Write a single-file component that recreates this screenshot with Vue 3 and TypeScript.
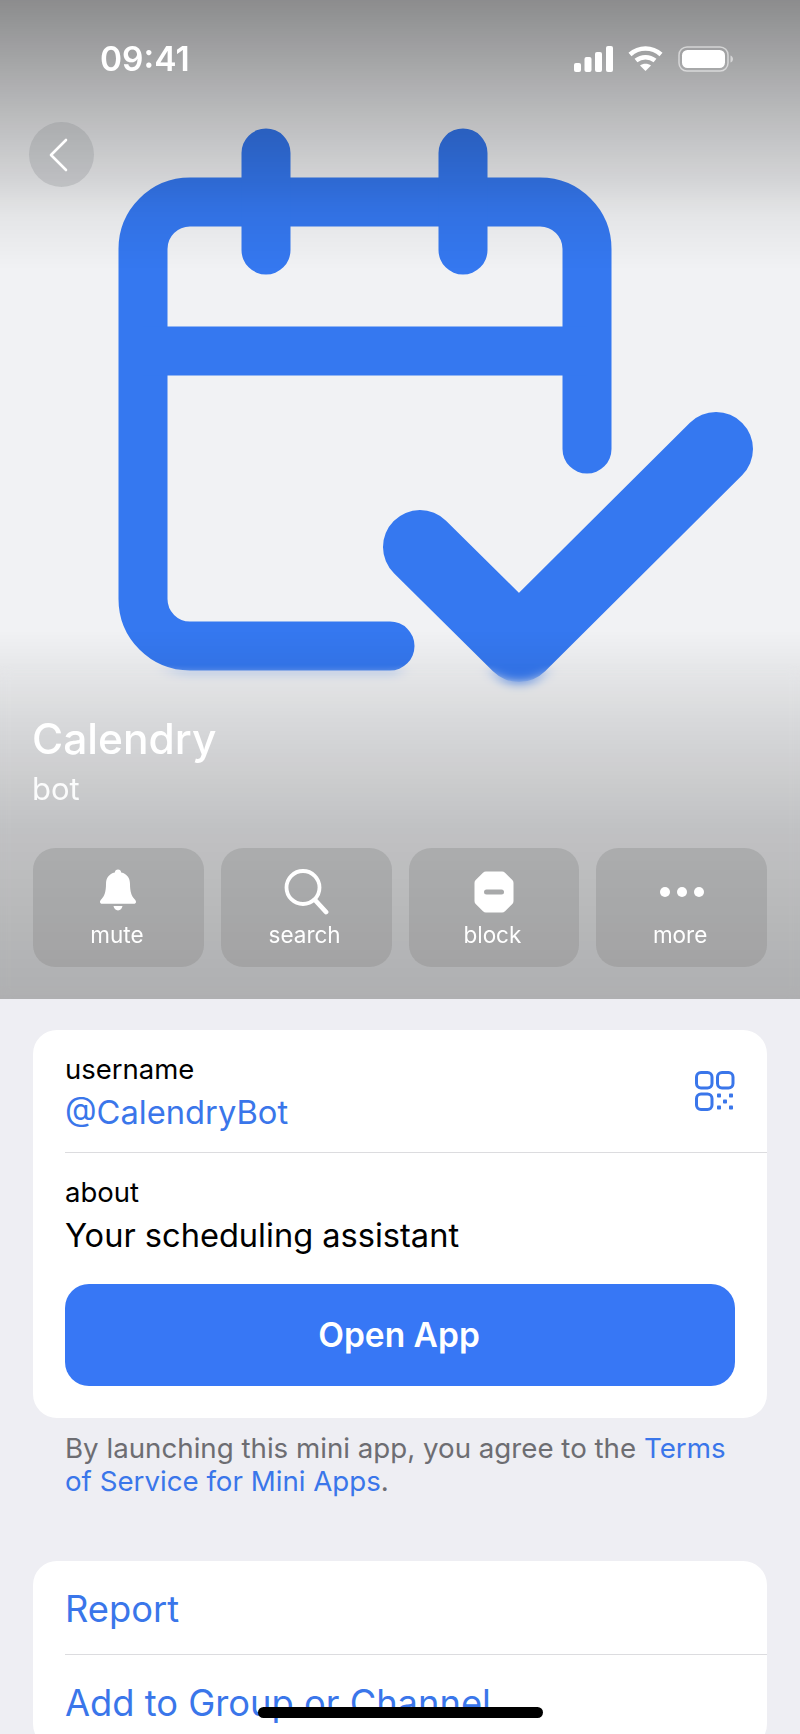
<template>
  <div class="page">
    <header class="hero">
      <svg class="hero-art" viewBox="0 0 800 999" width="800" height="999">
        <g fill="none" stroke="#3578f0" stroke-width="49" stroke-linecap="round" stroke-linejoin="round">
          <path d="M390 646H190a47 47 0 0 1-47-47V249a47 47 0 0 1 47-47H540a47 47 0 0 1 47 47V449" />
          <path d="M143 351H587" stroke-linecap="butt" />
          <path d="M266 153V250M463 153V250" />
          <path d="M420 547L519 645L716 449" stroke-width="74" />
        </g>
      </svg>
      <div class="hero-blur"></div>
      <div class="hero-shade"></div>

      <div class="status-bar">
        <span class="time">09:41</span>
        <div class="status-icons">
          <svg width="39" height="26" viewBox="0 0 39 26" fill="#fff">
            <rect x="0" y="17" width="7" height="9" rx="2" />
            <rect x="10.500" y="11" width="7" height="15" rx="2" />
            <rect x="21" y="6" width="7" height="20" rx="2" />
            <rect x="32" y="0" width="7" height="26" rx="2" />
          </svg>
          <svg width="35" height="26" viewBox="0 0 35 26" fill="none" stroke="#fff" stroke-width="4.500">
            <path d="M2 8.500C11 0.500 24 0.500 33 8.500" />
            <path d="M8 14.500C13.500 10 21.500 10 27 14.500" />
            <path d="M17.500 25L12 19.500C15 17 20 17 23 19.500Z" fill="#fff" stroke="none" />
          </svg>
          <svg width="55" height="26" viewBox="0 0 55 26">
            <rect x="1" y="1" width="49" height="24" rx="8" fill="none" stroke="#fff" stroke-opacity=".55" stroke-width="1.500" />
            <rect x="4" y="4" width="43" height="18" rx="5.500" fill="#fff" />
            <path d="M52.500 9.500c1.500.5 2.500 2 2.500 3.500s-1 3-2.500 3.500z" fill="#fff" fill-opacity=".55" />
          </svg>
        </div>
      </div>

      <button class="back" type="button" aria-label="Back">
        <svg width="22" height="34" viewBox="0 0 22 34" fill="none" stroke="#fff" stroke-width="2.600" stroke-linecap="round" stroke-linejoin="round">
          <path d="M18 2L3 17L18 32" />
        </svg>
      </button>

      <div class="hero-info">
        <h1>Calendry</h1>
        <p>bot</p>
        <div class="actions">
          <button v-for="a in actions" :key="a" class="action" type="button">
            <svg width="46" height="46" viewBox="0 0 46 46" fill="#fff">
              <template v-if="a === 'mute'">
                <path d="M23 .5c1.800 0 3 1.200 3.200 3 5.800 1.300 8.800 5.500 8.800 11.500 0 7.500 1.500 12 4.400 15 1 1.100 1.600 1.900 1.600 2.900 0 1.200-.9 1.800-2.200 1.800H7.200C5.900 34.700 5 34.100 5 32.900c0-1 .6-1.800 1.600-2.900C9.500 27 11 22.500 11 15c0-6 3-10.200 8.800-11.500.2-1.800 1.400-3 3.200-3z" />
                <path d="M18.500 37h9c-.5 2.600-2.300 4.400-4.500 4.400s-4-1.800-4.500-4.400z" />
              </template>
              <template v-else-if="a === 'search'">
                <circle cx="20" cy="18.500" r="16.500" fill="none" stroke="#fff" stroke-width="3.800" />
                <path d="M32 31L43 43" stroke="#fff" stroke-width="4.800" stroke-linecap="round" />
              </template>
              <template v-else-if="a === 'block'">
                <path d="M15 2.500h16c1.200 0 2.200.4 3 1.200l7.300 7.300c.8.800 1.200 1.800 1.200 3v18c0 1.200-.4 2.200-1.200 3L34 42.300c-.8.800-1.800 1.200-3 1.200H15c-1.200 0-2.200-.4-3-1.200L4.700 35c-.8-.8-1.200-1.800-1.200-3V14c0-1.200.4-2.200 1.200-3L12 3.700c.8-.8 1.800-1.200 3-1.200z" />
                <rect x="13" y="20.500" width="20" height="5" rx="2.500" fill="#a8a9aa" />
              </template>
              <template v-else>
                <circle cx="6" cy="23" r="5" />
                <circle cx="23" cy="23" r="5" />
                <circle cx="40" cy="23" r="5" />
              </template>
            </svg>
            <span>{{ a }}</span>
          </button>
        </div>
      </div>
    </header>

    <main class="content">
      <section class="card info-card">
        <div class="row username-row">
          <div>
            <div class="label">username</div>
            <a class="handle">@CalendryBot</a>
          </div>
          <svg width="40" height="40" viewBox="0 0 40 40" fill="none" stroke="#3a76ea" stroke-width="3">
            <rect x="1.500" y="1.500" width="15.500" height="15.500" rx="4.500" />
            <rect x="22.500" y="1.500" width="15.500" height="15.500" rx="4.500" />
            <rect x="1.500" y="23" width="15.500" height="15.500" rx="4.500" />
            <g fill="#3a76ea" stroke="none">
              <rect x="22" y="22.500" width="4" height="4" rx=".8" />
              <rect x="34" y="22.500" width="4" height="4" rx=".8" />
              <rect x="28" y="28.500" width="4" height="4" rx=".8" />
              <rect x="22" y="34.500" width="4" height="4" rx=".8" />
              <rect x="34" y="34.500" width="4" height="4" rx=".8" />
            </g>
          </svg>
        </div>
        <div class="about">
          <div class="label">about</div>
          <div class="value">Your scheduling assistant</div>
          <button class="open-btn" type="button">Open App</button>
        </div>
      </section>

      <p class="terms">
        By launching this mini app, you agree to the <a>Terms of Service for Mini Apps</a>.
      </p>

      <section class="card link-card">
        <a v-for="l in links" :key="l" class="link-row">{{ l }}</a>
      </section>
    </main>

    <div class="home-indicator"></div>
  </div>
</template>

<script setup lang="ts">
const actions: string[] = ["mute", "search", "block", "more"];
const links: string[] = ["Report", "Add to Group or Channel"];
</script>

<style>
html,
body {
  margin: 0;
  background: #eeeef3;
}
</style>

<style scoped>
.page {
  position: relative;
  width: 800px;
  height: 1734px;
  overflow: hidden;
  background: #eeeef3;
  font-family: Inter, "Liberation Sans", sans-serif;
}

.hero {
  position: relative;
  height: 999px;
  background: #f1f2f4;
  display: flex;
  flex-direction: column;
  color: #fff;
}

.hero-art {
  position: absolute;
  left: 0;
  top: 0;
}

/* the picture goes soft towards the bottom, under the name */
.hero-blur {
  position: absolute;
  left: 0;
  right: 0;
  top: 664px;
  bottom: 0;
  backdrop-filter: blur(6px);
  -webkit-mask-image: linear-gradient(to bottom, transparent, #000 20px);
  mask-image: linear-gradient(to bottom, transparent, #000 20px);
}

.hero-shade {
  position: absolute;
  inset: 0;
  background: linear-gradient(
    to bottom,
    rgba(0, 0, 0, 0.42) 0,
    rgba(0, 0, 0, 0.25) 100px,
    rgba(0, 0, 0, 0.12) 180px,
    rgba(0, 0, 0, 0.05) 215px,
    rgba(0, 0, 0, 0) 270px,
    rgba(0, 0, 0, 0) 630px,
    rgba(0, 0, 0, 0.1) 720px,
    rgba(0, 0, 0, 0.2) 830px,
    rgba(0, 0, 0, 0.275) 999px
  );
}

.status-bar {
  position: relative;
  display: flex;
  justify-content: space-between;
  align-items: center;
  padding: 44px 67px 0 100px;
  height: 30px;
}

.time {
  font-size: 33.500px;
  font-weight: 600;
  line-height: 30px;
}

.status-icons {
  display: flex;
  align-items: center;
  gap: 15px;
}

.back {
  position: relative;
  width: 65px;
  height: 65px;
  margin: 48px 0 0 29px;
  border: none;
  border-radius: 50%;
  padding: 0 5px 0 0;
  background: rgba(120, 125, 128, 0.25);
  display: flex;
  align-items: center;
  justify-content: center;
}

.hero-info {
  position: relative;
  margin-top: auto;
  padding: 0 33px 32px;
}

.hero-info h1 {
  margin: 0 0 0 -1px;
  font-size: 42.500px;
  font-weight: 500;
  line-height: 52px;
}

.hero-info p {
  margin: 6px 0 0 -1px;
  font-size: 31px;
  line-height: 36px;
  font-weight: 400;
  opacity: 0.92;
}

.actions {
  display: grid;
  grid-template-columns: repeat(4, 1fr);
  gap: 17px;
  margin-top: 41px;
}

.action {
  height: 119px;
  border: none;
  border-radius: 22px;
  background: rgba(125, 125, 125, 0.3);
  color: #fff;
  font: inherit;
  display: flex;
  flex-direction: column;
  align-items: center;
  padding: 21px 0 0;
}

.action span {
  margin: 6px 3px 0 0;
  font-size: 22.500px;
  line-height: 28px;
}

.content {
  padding: 31px 33px 0;
}

.card {
  background: #fff;
  border-radius: 24px;
}

.info-card {
  height: 388px;
  box-sizing: border-box;
  padding-left: 32px;
}

.row {
  display: flex;
  justify-content: space-between;
  align-items: center;
}

.username-row {
  height: 122px;
  padding-right: 32px;
  border-bottom: 1.500px solid #dcdcdf;
}

.label {
  font-size: 27.500px;
  line-height: 36px;
  color: #000;
}

.username-row .label {
  margin-top: 1px;
}

.handle {
  display: block;
  margin-top: 4px;
  font-size: 32.700px;
  line-height: 42px;
  color: #3a76ea;
}

.about {
  padding: 21px 32px 0 0;
}

.value {
  margin-top: 4px;
  font-size: 32.600px;
  line-height: 42px;
  color: #000;
}

.open-btn {
  display: block;
  width: 100%;
  height: 102px;
  margin-top: 28px;
  padding: 0 2px 0 0;
  border: none;
  border-radius: 24px;
  background: #3777f5;
  color: #fff;
  font: inherit;
  font-size: 33.500px;
  font-weight: 600;
}

.terms {
  margin: 14px 32px 0;
  font-size: 27.700px;
  line-height: 33px;
  color: #6d6d72;
}

.terms a {
  color: #3a76ea;
}

.link-card {
  margin-top: 63px;
  padding-left: 32px;
}

.link-row {
  display: block;
  height: 93px;
  line-height: 96px;
  font-size: 36.300px;
  color: #3a76ea;
}

.link-row + .link-row {
  border-top: 1.500px solid #dcdcdf;
}

.home-indicator {
  position: absolute;
  left: 258px;
  top: 1707px;
  width: 285px;
  height: 11px;
  border-radius: 6px;
  background: #000;
}
</style>
